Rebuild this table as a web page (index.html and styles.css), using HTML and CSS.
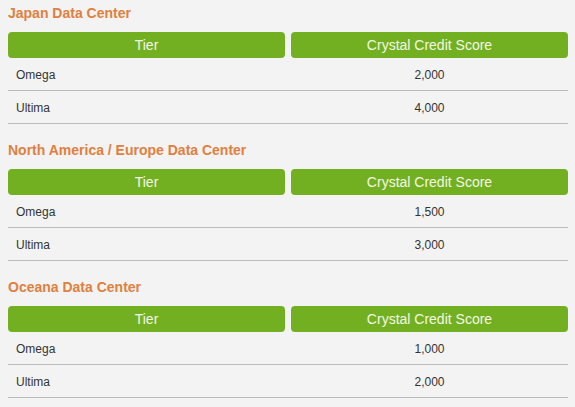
FILE: index.html
```html
<!DOCTYPE html>
<html>
<head>
<meta charset="utf-8">
<link rel="stylesheet" href="styles.css">
</head>
<body>
<div class="page">
  <section class="dc">
    <h2 class="dc-title">Japan Data Center</h2>
    <div class="head"><div class="hcell">Tier</div><div class="hcell">Crystal Credit Score</div></div>
    <div class="row"><div class="tier">Omega</div><div class="score">2,000</div></div>
    <div class="row"><div class="tier">Ultima</div><div class="score">4,000</div></div>
  </section>
  <section class="dc">
    <h2 class="dc-title">North America / Europe Data Center</h2>
    <div class="head"><div class="hcell">Tier</div><div class="hcell">Crystal Credit Score</div></div>
    <div class="row"><div class="tier">Omega</div><div class="score">1,500</div></div>
    <div class="row"><div class="tier">Ultima</div><div class="score">3,000</div></div>
  </section>
  <section class="dc">
    <h2 class="dc-title">Oceana Data Center</h2>
    <div class="head"><div class="hcell">Tier</div><div class="hcell">Crystal Credit Score</div></div>
    <div class="row"><div class="tier">Omega</div><div class="score">1,000</div></div>
    <div class="row"><div class="tier">Ultima</div><div class="score">2,000</div></div>
  </section>
</div>
</body>
</html>
```
FILE: styles.css
```css
html, body {
  margin: 0;
  padding: 0;
  background: #f3f3f3;
}
body {
  font-family: "Liberation Sans", Arial, sans-serif;
  color: #333333;
}
.page {
  padding: 0 7px 0 8px;
}
.dc {
  margin-bottom: 18px;
}
.dc-title {
  margin: 5px 0 11px 0;
  font-size: 14px;
  line-height: 16px;
  font-weight: bold;
  color: #e0803e;
}
.dc + .dc .dc-title {
  margin-top: 0;
}
.head {
  display: grid;
  grid-template-columns: 1fr 1fr;
  gap: 6px;
}
.hcell {
  background: #72b022;
  color: #f4f7e2;
  border-radius: 4px;
  height: 26px;
  line-height: 26px;
  text-align: center;
  font-size: 14px;
}
.row {
  display: grid;
  grid-template-columns: 1fr 1fr;
  gap: 6px;
  height: 30px;
  padding-top: 2px;
  align-items: center;
  border-bottom: 1px solid #bdbdbd;
  font-size: 12px;
}
.tier {
  padding-left: 8px;
}
.score {
  text-align: center;
}
```
